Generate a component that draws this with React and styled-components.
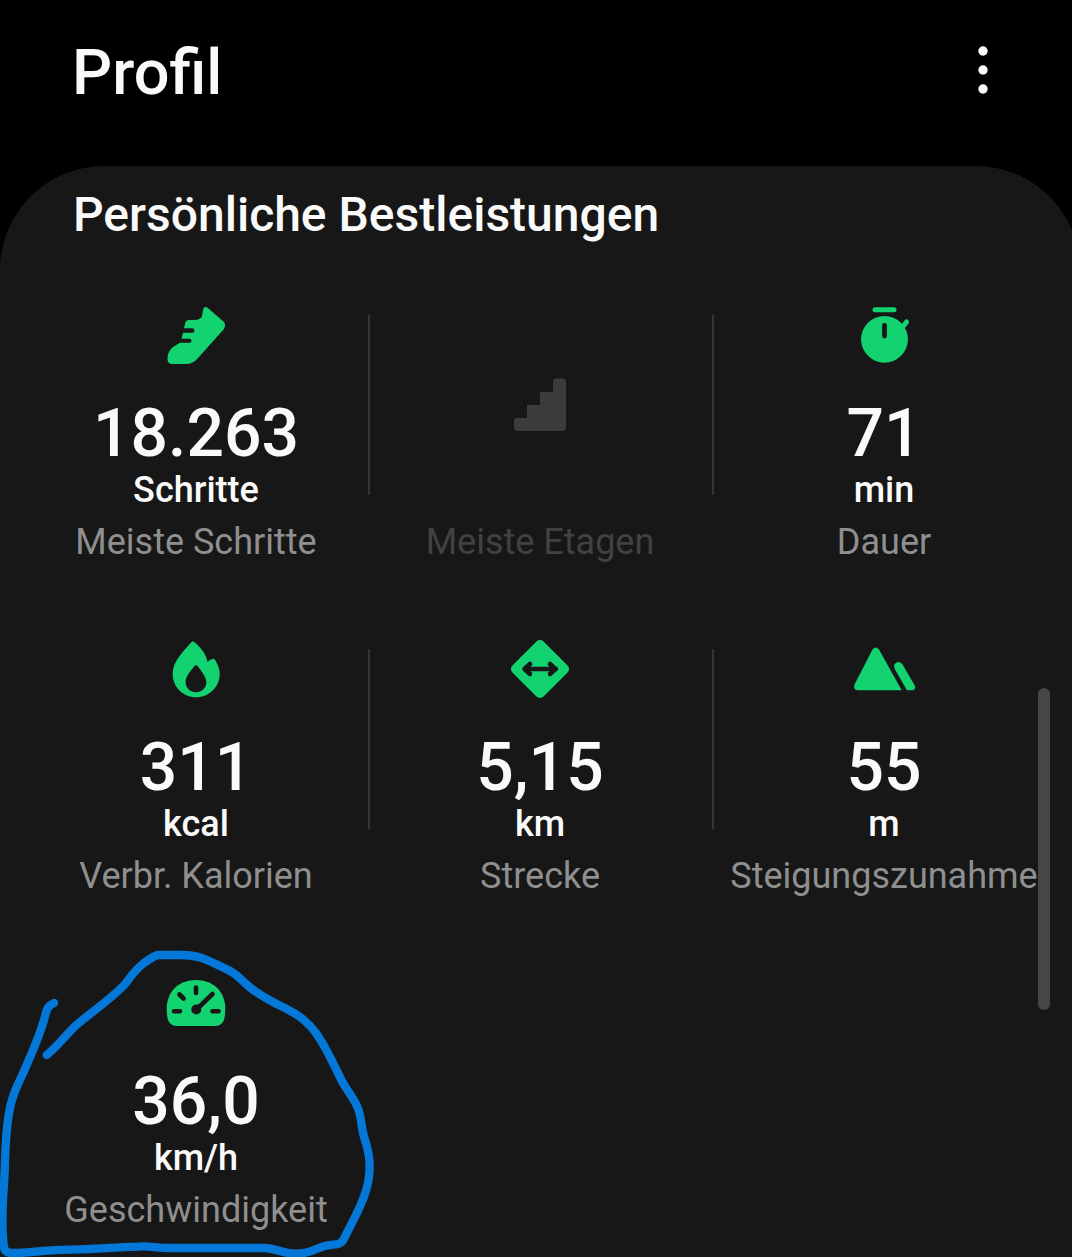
import React from "react";
import styled, { createGlobalStyle } from "styled-components";

const GlobalStyle = createGlobalStyle`
  * {
    box-sizing: border-box;
  }
  body {
    margin: 0;
    background-color: #000;
    color: #fafafa;
    font-family: Roboto, "Liberation Sans", sans-serif;
  }
`;

const Page = styled.div`
  position: relative;
  min-height: 100vh;
  display: flex;
  flex-direction: column;
  overflow: hidden;
`;

const Header = styled.header`
  display: flex;
  justify-content: space-between;
  align-items: center;
  padding: 35px 65px 55px 72px;
`;

const Title = styled.h1`
  margin: 0;
  font-size: 63px;
  font-weight: 500;
  line-height: 76px;
`;

const MoreButton = styled.button`
  width: 48px;
  height: 76px;
  padding: 0;
  border: none;
  background: none;
  color: inherit;
  cursor: pointer;
`;

const Panel = styled.main`
  flex: 1;
  margin-right: -8px;
  padding: 21px 24px 25px;
  border-radius: 104px 104px 0 0;
  background-color: #171717;
`;

const SectionTitle = styled.h2`
  margin: 0 49px 60px;
  font-size: 48px;
  font-weight: 500;
  line-height: 56px;
`;

const StatGrid = styled.ul`
  display: grid;
  grid-template-columns: repeat(3, 1fr);
  row-gap: 73px;
  margin: 0;
  padding: 0;
  list-style: none;
`;

const StatCell = styled.li`
  position: relative;
  display: flex;
  flex-direction: column;
  align-items: center;

  &:not(:nth-child(3n + 1))::before {
    content: "";
    position: absolute;
    left: 0;
    top: 12px;
    width: 2px;
    height: 180px;
    background-color: #353535;
  }
`;

const StatBody = styled.div`
  height: 207px;
  display: flex;
  flex-direction: column;
  align-items: center;
  justify-content: ${props => (props.$muted ? "center" : "flex-start")};
`;

const Icon = styled.svg`
  width: 64px;
  height: 64px;
  flex: none;
  color: ${props => (props.$muted ? "#3c3c3c" : "#12d370")};
`;

const Value = styled.div`
  margin-top: 30px;
  font-size: 66px;
  font-weight: 500;
  line-height: 74px;
`;

const Unit = styled.div`
  font-size: 36px;
  font-weight: 500;
  line-height: 39px;
`;

const Label = styled.div`
  margin-top: 10px;
  font-size: 36px;
  line-height: 44px;
  white-space: nowrap;
  color: ${props => (props.$muted ? "#414141" : "#8f8f8f")};
`;

const ScrollThumb = styled.div`
  position: absolute;
  top: 688px;
  right: 22px;
  width: 12px;
  height: 322px;
  border-radius: 6px;
  background-color: #464646;
`;

// hand drawn circle, hangs over the cell on every side
const Scribble = styled.svg`
  position: absolute;
  left: -24px;
  top: -31px;
  width: 390px;
  height: 317px;
  pointer-events: none;
`;

const DARK = "#171717";

const shoe = (
  <path
    fill="currentColor"
    d="M41 4Q43 3.500 45 6L60 19Q62 22 60 26L34 55Q29 61 22 61L7 61Q3 60 3.500 55Q4 48 9 44L16 39.700H25.500Q27.500 39.700 27.500 38Q27.500 35.700 25.500 35.700H17.500L19 29.800H28Q30.500 29.800 30.500 27.500Q30.500 25.200 28 25.200H20L21.500 19Q22.500 17 25 17H30Q38 17 38.500 11Q39 4 41 4Z"
  />
);

const stairs = (
  <path
    fill="currentColor"
    d="M9 43H19V30H32V17H45V7Q45 3.500 48.500 3.500H54.500Q58 3.500 58 7V52.500Q58 56 54.500 56H9.500Q6 56 6 52.500V46Q6 43 9 43Z"
  />
);

const stopwatch = (
  <>
    <circle cx="32.500" cy="36.300" r="23.400" fill="currentColor" />
    <path
      d="M23 6.700H42M49 26L54.500 19"
      stroke="currentColor"
      strokeWidth="5"
      strokeLinecap="round"
    />
    <path d="M32.500 22.500V33" stroke={DARK} strokeWidth="4.800" strokeLinecap="round" />
  </>
);

const flame = (
  <>
    <path
      fill="currentColor"
      d="M28 4.500Q29.500 4 31 5.500Q42 15 43.500 25Q46 22 49.500 21.800Q51 22 52 24.500Q55.700 31 55.700 37C55.700 50 45 60.300 32.300 60.300C19 60.300 8.700 50 8.700 37C8.700 27 14 21 19.500 14Z"
    />
    <path
      fill={DARK}
      d="M32 28Q33 28 35 31Q42.400 40 42.400 45C42.400 51 38 55.200 32 55.200C26 55.200 21.600 51 21.600 45C21.600 40 25 36 29 31Q31 28 32 28Z"
    />
  </>
);

const distance = (
  <>
    <rect
      x="10"
      y="10"
      width="44"
      height="44"
      rx="5"
      fill="currentColor"
      transform="rotate(45 32 32)"
    />
    <path
      d="M17 32H48M22 27L16.500 32L22 37M42 27L47.500 32L42 37"
      fill="none"
      stroke={DARK}
      strokeWidth="4.600"
      strokeLinecap="round"
      strokeLinejoin="round"
    />
  </>
);

const mountain = (
  <>
    <path
      fill="currentColor"
      d="M20.500 12.500Q23.700 8.500 27 12.500L49.700 53.300H5.500Q1 52.500 2.500 47.500Z"
    />
    <path
      fill="currentColor"
      d="M43 32.500Q40.500 27.500 44.500 25.500Q48 24 50.500 27.500L62.500 48Q64.500 52.500 60 53.300H55Z"
    />
  </>
);

const gauge = (
  <>
    <path
      fill="currentColor"
      d="M2.700 38C2.700 20 15 9 32 9C49 9 61.300 20 61.300 38Q61.300 46 59.500 50Q57 55 51 55H13Q7 55 4.500 50Q2.700 46 2.700 38Z"
    />
    <path
      d="M10 40.300H16M48.500 40.300H54.500M32 16.500V22M15.500 23.500L19.500 27.500M32.500 38.500L48.500 23"
      stroke={DARK}
      strokeWidth="4.600"
      strokeLinecap="round"
    />
    <circle cx="32.300" cy="38.500" r="5" fill={DARK} />
  </>
);

const stats = [
  { label: "Meiste Schritte", value: "18.263", unit: "Schritte", icon: shoe },
  { label: "Meiste Etagen", icon: stairs },
  { label: "Dauer", value: "71", unit: "min", icon: stopwatch },
  { label: "Verbr. Kalorien", value: "311", unit: "kcal", icon: flame },
  { label: "Strecke", value: "5,15", unit: "km", icon: distance },
  { label: "Steigungszunahme", value: "55", unit: "m", icon: mountain },
  {
    label: "Geschwindigkeit",
    value: "36,0",
    unit: "km/h",
    icon: gauge,
    circled: true
  }
];

function Stat({ label, value, unit, icon, circled }) {
  const muted = !value;

  return (
    <StatCell>
      <StatBody $muted={muted}>
        <Icon viewBox="0 0 64 64" $muted={muted} aria-hidden="true">
          {icon}
        </Icon>
        {value && <Value>{value}</Value>}
        {unit && <Unit>{unit}</Unit>}
      </StatBody>
      <Label $muted={muted}>{label}</Label>
      {circled && (
        <Scribble viewBox="0 0 1170 951" aria-hidden="true">
          <path
            d="M162 189C144 197 140 207 136 225C125 272 103 322 82 370C60 425 35 460 26 525C12 610 18 670 10 760C6 830 7 890 12 922Q14 939 35 939C90 939 140 929 210 929C300 928 370 920 430 919C460 919 470 924 510 924H795C830 925 840 939 885 941C945 942 945 918 1000 914Q1023 913 1030 900C1050 860 1075 815 1092 770C1105 735 1109 715 1109 680C1109 635 1100 620 1092 590C1082 555 1085 530 1072 500C1058 470 1040 450 1024 420C1000 370 975 315 945 275C910 230 870 211 830 192C790 171 770 160 745 138C715 112 710 100 675 85C630 66 610 46 545 45H475C463 46 448 58 432 69C395 97 390 118 368 140C320 187 270 220 228 256C195 288 170 322 140 345"
            fill="none"
            stroke="#0478d8"
            strokeWidth="25"
            strokeLinecap="round"
            strokeLinejoin="round"
          />
        </Scribble>
      )}
    </StatCell>
  );
}

function App() {
  return (
    <Page>
      <GlobalStyle />
      <Header>
        <Title>Profil</Title>
        <MoreButton type="button" aria-label="Weitere Optionen">
          <svg width="48" height="76" viewBox="0 0 48 76" fill="currentColor">
            <circle cx="24" cy="16" r="4.700" />
            <circle cx="24" cy="35" r="4.700" />
            <circle cx="24" cy="54" r="4.700" />
          </svg>
        </MoreButton>
      </Header>
      <Panel>
        <SectionTitle>Persönliche Bestleistungen</SectionTitle>
        <StatGrid>
          {stats.map(stat => (
            <Stat key={stat.label} {...stat} />
          ))}
        </StatGrid>
      </Panel>
      <ScrollThumb />
    </Page>
  );
}

export default App;
